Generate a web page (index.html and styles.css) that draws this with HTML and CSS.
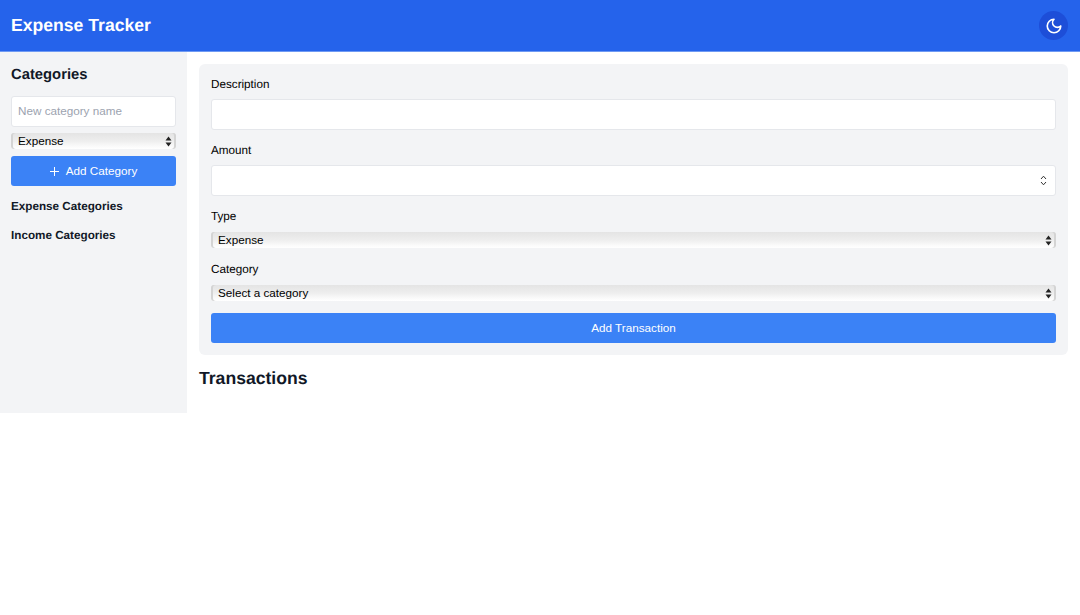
FILE: index.html
```html
<!DOCTYPE html>
<html lang="en">
<head>
<meta charset="utf-8">
<title>Expense Tracker</title>
<link rel="stylesheet" href="styles.css">
</head>
<body>
<header class="topbar">
  <h1 class="brand">Expense Tracker</h1>
  <button class="theme-btn" type="button" aria-label="Toggle theme">
    <svg width="18" height="18" viewBox="0 0 24 24" fill="none" stroke="#fff" stroke-width="2.2" stroke-linecap="round" stroke-linejoin="round"><path d="M12 3a6 6 0 0 0 9 9 9 9 0 1 1-9-9Z"/></svg>
  </button>
</header>
<div class="layout">
  <aside class="sidebar">
    <h2 class="side-title">Categories</h2>
    <input class="field side-field" type="text" placeholder="New category name">
    <div class="select-wrap side-select">
      <select class="select"><option>Expense</option><option>Income</option></select>
      <svg class="arrows" width="7" height="11" viewBox="0 0 7 11"><path d="M3.5 0.5 6.5 4.5H0.5Z M3.5 10.5 0.5 6.5H6.5Z" fill="#222"/></svg>
    </div>
    <button class="btn side-btn" type="button">
      <svg width="9" height="9" viewBox="0 0 9 9" fill="none" stroke="#fff" stroke-width="1"><path d="M4.5 0V9M0 4.5H9"/></svg>
      <span>Add Category</span>
    </button>
    <h3 class="side-sub">Expense Categories</h3>
    <h3 class="side-sub">Income Categories</h3>
  </aside>
  <main class="content">
    <form class="card">
      <label class="label">Description</label>
      <input class="field main-field" type="text">
      <label class="label">Amount</label>
      <div class="number-wrap">
        <input class="field main-field" type="text" inputmode="numeric">
        <svg class="spinner" width="7" height="11" viewBox="0 0 7 11" fill="none" stroke="#333" stroke-width="1"><path d="M1 4 3.5 1.2 6 4M1 7 3.5 9.8 6 7"/></svg>
      </div>
      <label class="label label-type">Type</label>
      <div class="select-wrap main-select">
        <select class="select"><option>Expense</option><option>Income</option></select>
        <svg class="arrows" width="7" height="11" viewBox="0 0 7 11"><path d="M3.5 0.5 6.5 4.5H0.5Z M3.5 10.5 0.5 6.5H6.5Z" fill="#222"/></svg>
      </div>
      <label class="label label-category">Category</label>
      <div class="select-wrap main-select">
        <select class="select"><option>Select a category</option></select>
        <svg class="arrows" width="7" height="11" viewBox="0 0 7 11"><path d="M3.5 0.5 6.5 4.5H0.5Z M3.5 10.5 0.5 6.5H6.5Z" fill="#222"/></svg>
      </div>
      <button class="btn submit-btn" type="button">Add Transaction</button>
    </form>
    <h2 class="section-title">Transactions</h2>
  </main>
</div>
</body>
</html>
```
FILE: styles.css
```css
* { box-sizing: border-box; }
html, body { margin: 0; padding: 0; background: #fff; }
body { font-family: "Liberation Sans", Arial, sans-serif; color: #000; font-size: 11.7px; text-rendering: geometricPrecision; }
.topbar {
  height: 52px;
  background: #2563eb;
  border-bottom: 1px solid #6f9af3;
  display: flex;
  align-items: center;
  justify-content: space-between;
  padding: 0 12px 0 11px;
}
.brand { margin: 0 0 2px; font-size: 17.6px; line-height: 26px; font-weight: 700; color: #fff; }
.theme-btn {
  width: 29px; height: 29px; padding: 0; border: 0; border-radius: 50%;
  background: #1d4ed8; display: flex; align-items: center; justify-content: center;
}
.layout { display: flex; align-items: flex-start; }
.sidebar {
  width: 187px; height: 361px; flex: none;
  background: #f3f4f6; padding: 13px 11px 12px;
  display: flex; flex-direction: column;
}
.side-title { margin: 0 0 11px; font-size: 14.8px; line-height: 20px; font-weight: 700; color: #111827; }
.field {
  display: block; width: 100%;
  background: #fff; border: 1px solid #e5e7eb; border-radius: 3px;
  font-family: inherit; font-size: 11.7px; color: #000; padding: 0 6px; outline: 0;
}
.field::placeholder { color: #9ca3af; opacity: 1; }
.side-field { height: 31px; flex: none; padding-bottom: 2px; }
.main-field { height: 31px; flex: none; }
.select-wrap { position: relative; }
.select {
  display: block; width: 100%; height: 100%;
  appearance: none; -webkit-appearance: none;
  border: 0; border-radius: 3px; margin: 0; padding: 0 7px 2px;
  background: linear-gradient(#e4e4e4, #eeeeee 50%, #fbfbfb 85%, #fff);
  box-shadow: inset 2px 0 0 #d4d4d4, inset -2px 0 0 #d4d4d4;
  font-family: inherit; font-size: 11.7px; color: #000;
}
.arrows { position: absolute; right: 4px; top: 50%; margin-top: -5px; pointer-events: none; }
.side-select { height: 16px; margin-top: 6px; flex: none; }
.main-select { height: 16px; flex: none; }
.btn {
  border: 0; border-radius: 3px; background: #3b82f6; color: #fff;
  font-family: inherit; font-size: 11.7px; padding: 0 0 2px;
  display: flex; align-items: center; justify-content: center;
}
.side-btn { height: 30px; margin-top: 7px; gap: 7px; flex: none; }
.side-btn svg { margin-top: 2px; }
.side-sub { margin: 0; font-size: 11.7px; line-height: 18px; font-weight: 700; color: #111827; }
.side-btn + .side-sub { margin-top: 12px; }
.side-sub + .side-sub { margin-top: 10.5px; }
.content { flex: 1; padding: 12px; min-width: 0; }
.card {
  background: #f3f4f6; border-radius: 6px; padding: 12px;
  display: flex; flex-direction: column;
}
.label { display: block; flex: none; font-size: 11.7px; line-height: 18px; color: #000; margin-bottom: 5px; }
.label ~ .label { margin-top: 12px; }
.label ~ .label-type { margin-bottom: 6px; }
.label ~ .label-category { margin-top: 13px; margin-bottom: 6px; }
.number-wrap { position: relative; flex: none; }
.spinner { position: absolute; right: 9px; top: 10px; }
.submit-btn { height: 30px; margin-top: 12px; flex: none; width: 100%; }
.section-title { margin: 11px 0 0; font-size: 17.6px; line-height: 24px; font-weight: 700; color: #111827; }
```
